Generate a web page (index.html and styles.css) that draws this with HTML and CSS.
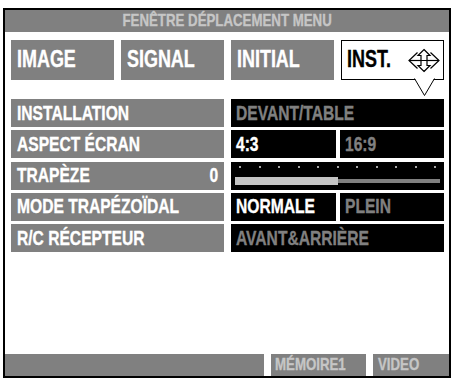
FILE: index.html
```html
<!DOCTYPE html>
<html lang="fr">
<head>
<meta charset="utf-8">
<title>Fenêtre déplacement menu</title>
<link rel="stylesheet" href="styles.css">
</head>
<body>
<div class="frame">
  <div class="title"><span class="t c">FENÊTRE DÉPLACEMENT MENU</span></div>
  <div class="tabs">
    <div class="tab"><span class="t">IMAGE</span></div>
    <div class="tab"><span class="t">SIGNAL</span></div>
    <div class="tab"><span class="t">INITIAL</span></div>
    <div class="tab active">
      <span class="t">INST.</span>
      <svg class="move-icon" width="34" height="25" viewBox="0 0 34 25" fill="none" stroke="#000" stroke-width="1.2" stroke-linejoin="miter">
        <path d="M2 12.5 H32"/>
        <path d="M10.5 4.5 L2 12.5 L10.5 20.5"/>
        <path d="M23.5 4.5 L32 12.5 L23.5 20.5"/>
        <path d="M17 1.5 L23 7.5 H20 V12.5 H14 V7.5 H11 Z" fill="#fff"/>
        <path d="M17 23.5 L23 17.5 H20 V12.5 H14 V17.5 H11 Z" fill="#fff"/>
      </svg>
      <svg class="pointer" width="21" height="19" viewBox="0 0 21 19">
        <polygon points="0.5,0 10.5,17.5 20.5,0" fill="#fff"/>
        <polyline points="0.5,0.5 10.5,17.5 20.5,0.5" fill="none" stroke="#000" stroke-width="1"/>
      </svg>
    </div>
  </div>
  <div class="rows">
    <div class="row">
      <div class="label"><span class="t">INSTALLATION</span></div>
      <div class="value off"><span class="t">DEVANT/TABLE</span></div>
    </div>
    <div class="row">
      <div class="label"><span class="t">ASPECT ÉCRAN</span></div>
      <div class="split">
        <div class="value on"><span class="t">4:3</span></div>
        <div class="value off"><span class="t">16:9</span></div>
      </div>
    </div>
    <div class="row">
      <div class="label"><span class="t">TRAPÈZE</span><span class="t r">0</span></div>
      <div class="value slider">
        <div class="dots">
          <i></i><i></i><i></i><i></i><i></i><i></i><i></i><i></i><i></i><i></i><i></i>
        </div>
        <div class="track"><div class="fill" style="width:50%"></div></div>
      </div>
    </div>
    <div class="row">
      <div class="label"><span class="t">MODE TRAPÉZOÏDAL</span></div>
      <div class="split">
        <div class="value on"><span class="t">NORMALE</span></div>
        <div class="value off"><span class="t">PLEIN</span></div>
      </div>
    </div>
    <div class="row">
      <div class="label"><span class="t">R/C RÉCEPTEUR</span></div>
      <div class="value off"><span class="t">AVANT&amp;ARRIÈRE</span></div>
    </div>
  </div>
  <div class="status">
    <div class="seg wide"></div>
    <div class="seg mem"><span class="t">MÉMOIRE1</span></div>
    <div class="seg src"><span class="t">VIDEO</span></div>
  </div>
</div>
</body>
</html>
```
FILE: styles.css
```css
* { box-sizing: border-box; }

html, body {
  margin: 0;
  padding: 0;
  background: #fff;
}

body {
  font-family: "Liberation Sans", Arial, sans-serif;
  font-weight: bold;
}

/* condensed lettering: Arial-width bold narrowed to a Helvetica Condensed look */
.t {
  display: inline-block;
  white-space: nowrap;
  transform: scaleX(0.78);
  transform-origin: left center;
  -webkit-text-stroke: 0.35px currentColor;
}

.t.c { transform-origin: center center; }
.t.r { transform-origin: right center; }

.frame {
  margin: 8px 0 0 3px;
  width: 448px;
  height: 370px;
  border: 2px solid #000;
  display: flex;
  flex-direction: column;
  background: #fff;
}

.title {
  height: 22px;
  background: #808080;
  color: #c6c6c6;
  font-size: 17px;
  line-height: 22px;
  text-align: center;
  flex: none;
  white-space: nowrap;
  overflow: hidden;
}

.tabs {
  margin-top: 8px;
  height: 40px;
  padding: 0 5px 0 6px;
  display: grid;
  grid-template-columns: repeat(4, minmax(0, 1fr));
  column-gap: 7px;
  flex: none;
}

.tab {
  min-width: 0;
  background: #808080;
  color: #fff;
  font-size: 23px;
  display: flex;
  align-items: center;
  padding: 0 6px 2px;
}

.tab.active {
  position: relative;
  background: #fff;
  color: #000;
  border: 1px solid #000;
  padding: 0 2px 2px 5px;
  justify-content: space-between;
}

.move-icon {
  display: block;
  flex: none;
  margin-top: 2px;
}

.pointer {
  position: absolute;
  left: 72px;
  top: 100%;
  margin-top: -1px;
  display: block;
}

.rows {
  margin-top: 19px;
  padding: 0 5px 0 6px;
  display: grid;
  grid-template-columns: minmax(0, 1fr);
  row-gap: 3.25px;
  flex: none;
}

.row {
  height: 28px;
  display: grid;
  grid-template-columns: repeat(2, minmax(0, 1fr));
  column-gap: 7px;
  font-size: 20px;
}

.label {
  min-width: 0;
  background: #808080;
  color: #fff;
  display: flex;
  align-items: center;
  justify-content: space-between;
  padding: 0 6px;
}

.value {
  min-width: 0;
  background: #000;
  display: flex;
  align-items: center;
  padding: 0 5px;
}

.value.on { color: #fff; }
.value.off { color: #808080; }

.split {
  min-width: 0;
  display: grid;
  grid-template-columns: 105px minmax(0, 1fr);
  column-gap: 4px;
}

.slider {
  flex-direction: column;
  align-items: stretch;
  padding: 4px 4px 0;
}

.dots {
  display: flex;
  justify-content: space-between;
  padding: 0 4px 0 4px;
  height: 3px;
}

.dots i {
  display: block;
  width: 2px;
  height: 2px;
  background: #e0e0e0;
  border-radius: 1px;
}

.track {
  margin-top: 10px;
  height: 4px;
  background: #808080;
  position: relative;
  width: 205px;
}

.fill {
  position: absolute;
  left: 0;
  top: -2px;
  height: 8px;
  background: #c4c4c4;
}

.status {
  margin-top: auto;
  height: 22px;
  display: flex;
  column-gap: 7px;
  flex: none;
}

.seg {
  background: #808080;
  color: #c6c6c6;
  font-size: 17px;
  line-height: 22px;
  padding: 0 4px;
  white-space: nowrap;
}

.seg.wide { width: 259px; }
.seg.mem { width: 95px; }
.seg.src { flex: 1; padding-left: 5px; }
```
